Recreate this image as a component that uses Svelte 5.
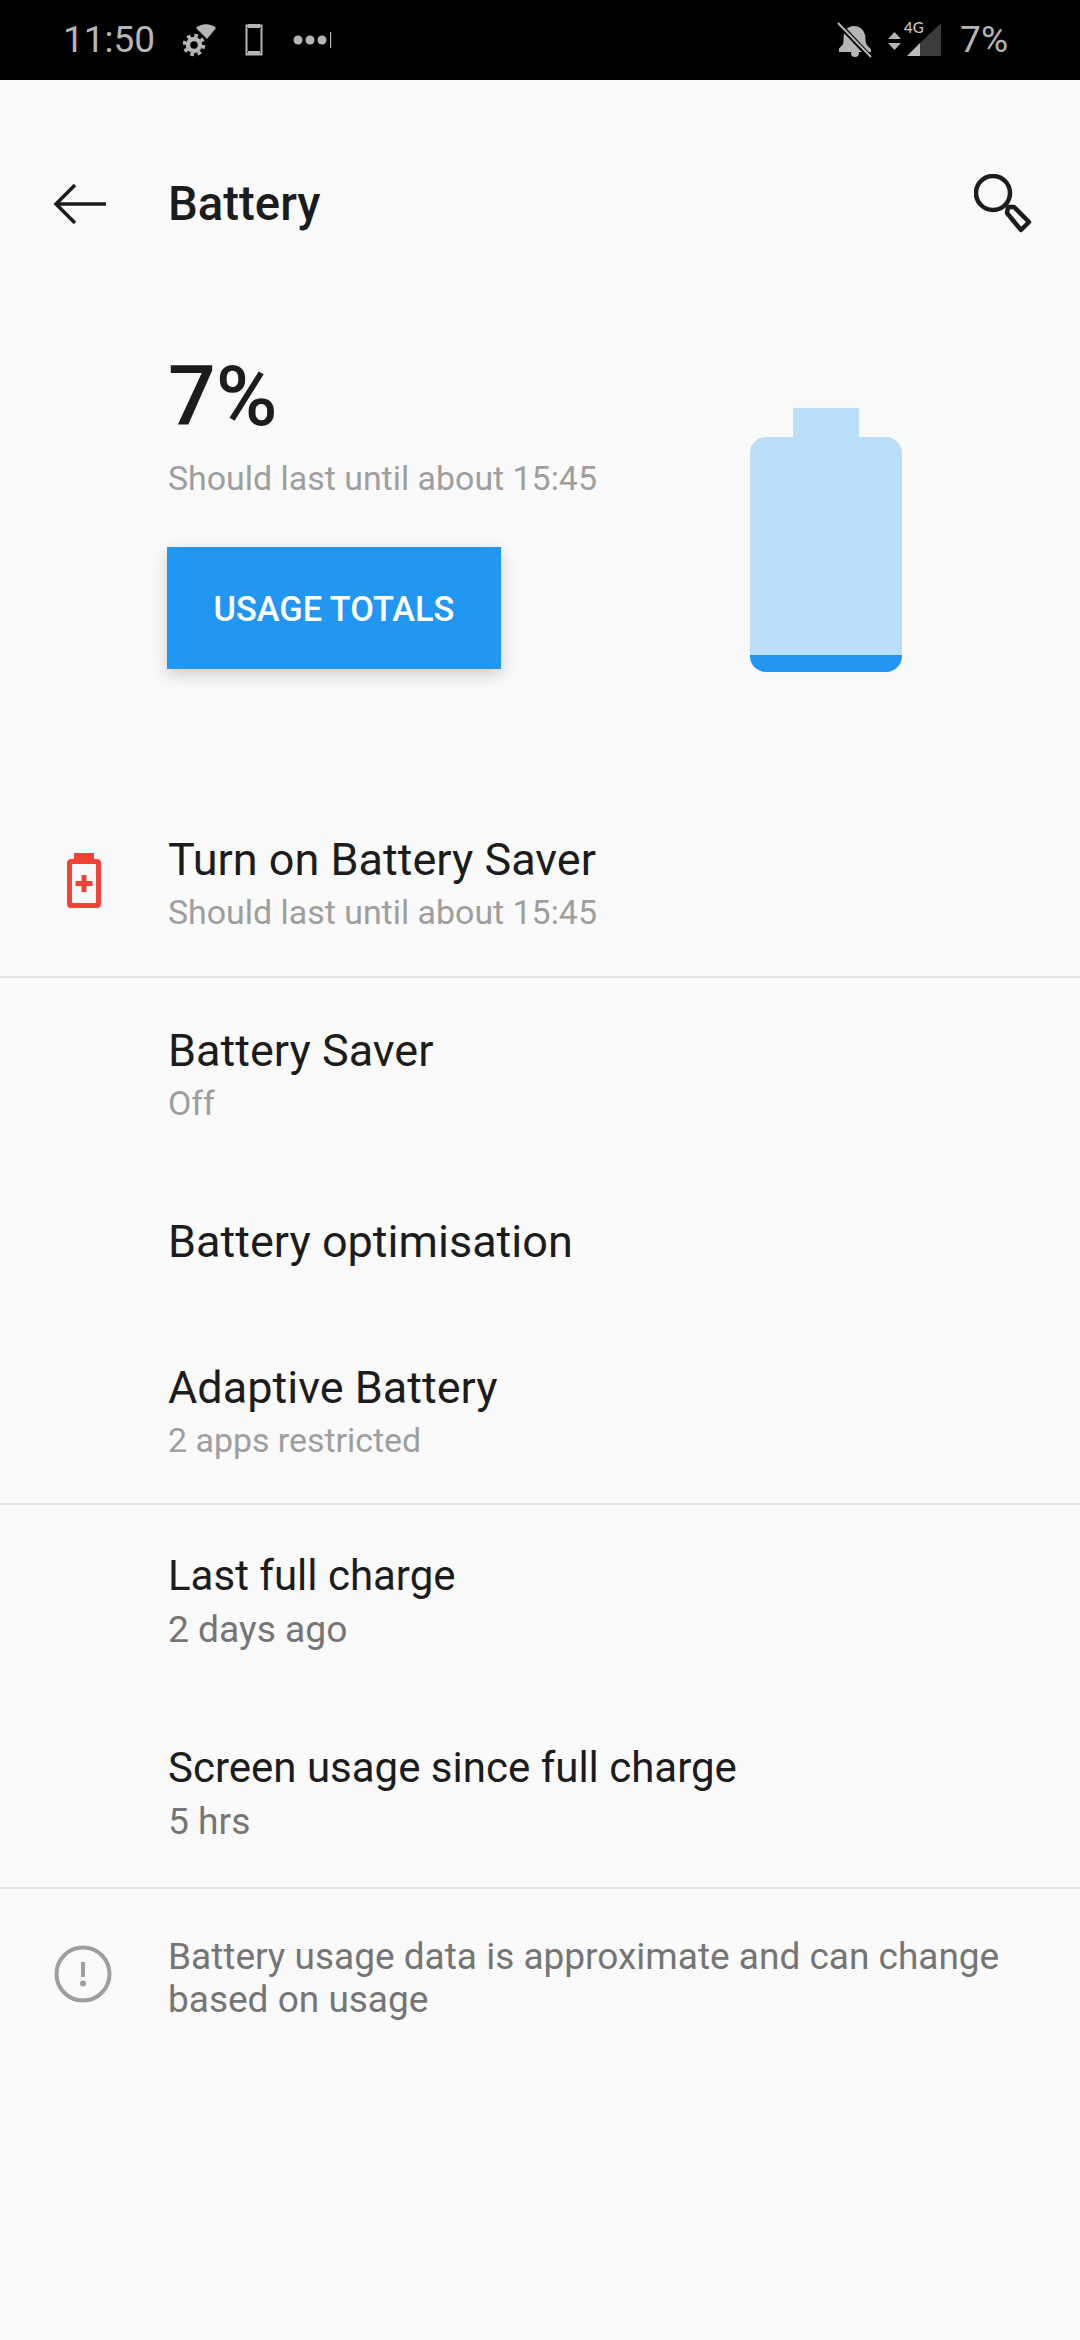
<script>
  const groups = [
    [
      { title: 'Battery Saver', sub: 'Off' },
      { title: 'Battery optimisation', single: true },
      { title: 'Adaptive Battery', sub: '2 apps restricted' }
    ],
    [
      { title: 'Last full charge', sub: '2 days ago', dark: true },
      { title: 'Screen usage since full charge', sub: '5 hrs', dark: true }
    ]
  ];
</script>

<div class="page">
  <header class="status">
    <div class="status-left">
      <span class="clock">11:50</span>
      <svg class="ico-gear" width="34" height="34" viewBox="0 0 34 34" fill="#b5b5b5">
        <path d="M13 5 C18 0 28 0 33 5 L24 16 Z"/>
        <circle cx="11" cy="22" r="6" fill="none" stroke="#b5b5b5" stroke-width="4.500"/>
        <circle cx="11" cy="22" r="9.500" fill="none" stroke="#b5b5b5" stroke-width="3.500" stroke-dasharray="3.700 3.760"/>
      </svg>
      <svg class="ico-phone" width="18" height="32" viewBox="0 0 18 32" fill="none">
        <rect x="1.500" y="1.500" width="15" height="29" stroke="#b5b5b5" stroke-width="2"/>
        <rect x="3" y="0" width="12" height="4" fill="#b5b5b5"/>
        <rect x="3" y="27" width="12" height="4" fill="#b5b5b5"/>
      </svg>
      <svg class="ico-dots" width="40" height="16" viewBox="0 0 40 16" fill="#b5b5b5">
        <circle cx="5" cy="8" r="4.500"/><circle cx="17" cy="8" r="4.500"/><circle cx="29" cy="8" r="4.500"/>
        <rect x="37" y="0" width="1.200" height="16"/>
      </svg>
    </div>
    <div class="status-right">
      <svg class="ico-bell" width="38" height="36" viewBox="0 0 38 36">
        <path fill="#b5b5b5" d="M3 27c0-1 3-3 4-5 1-3 0-6 1-10 1-5 5-8 10-8 6 0 10 4 11 9 1 4 0 7 2 10 1 2 4 3 4 5v2H3z"/>
        <circle cx="19" cy="31" r="4" fill="#b5b5b5"/>
        <path d="M2 1 L34 35" stroke="#000" stroke-width="5"/>
        <path d="M2 1 L35 35" stroke="#b5b5b5" stroke-width="2"/>
      </svg>
      <div class="net">
        <svg class="arrows" width="13" height="18" viewBox="0 0 13 18" fill="#b5b5b5">
          <path d="M6.500 0 L13 7 H0 Z"/><path d="M0 11 H13 L6.500 18 Z"/>
        </svg>
        <span class="four-g">4G</span>
        <svg class="signal" width="36" height="36" viewBox="0 0 36 36">
          <path fill="#3c3c3c" d="M35 1 V34 H14 V21 Z"/>
          <path fill="#bdbdbd" d="M1 34 L14 21 V34 Z"/>
        </svg>
      </div>
      <span class="pct">7%</span>
    </div>
  </header>

  <nav class="toolbar">
    <svg class="back" width="54" height="42" viewBox="0 0 54 42" fill="none" stroke="#1c1c1c" stroke-width="3.500">
      <path d="M53 21H3M22 2L3 21l19 19"/>
    </svg>
    <h1>Battery</h1>
    <svg class="search" width="60" height="60" viewBox="0 0 60 60" fill="none" stroke="#1c1c1c" stroke-width="4.500" stroke-linejoin="round">
      <circle cx="19" cy="19" r="17"/>
      <path d="M33 39 L34 33 L40 33 L55 48 L47 56 Z"/>
    </svg>
  </nav>

  <section class="hero">
    <div class="hero-text">
      <div class="big">7%</div>
      <div class="sub hero-sub">Should last until about 15:45</div>
      <button class="usage">USAGE TOTALS</button>
    </div>
    <div class="battery">
      <div class="nub"></div>
      <div class="body"><div class="level"></div></div>
    </div>
  </section>

  <section class="saver">
    <svg class="ico-left" width="36" height="56" viewBox="0 0 36 56" fill="none">
      <path d="M8 0h20v6h3a4 4 0 0 1 4 4v41a4 4 0 0 1-4 4H5a4 4 0 0 1-4-4V10a4 4 0 0 1 4-4h3z" fill="#f44336"/>
      <rect x="6" y="11" width="24" height="39" fill="#fafafa"/>
      <path d="M15.500 22h5v6h6v5h-6v6h-5v-6h-6v-5h6z" fill="#f44336"/>
    </svg>
    <div>
      <div class="title">Turn on Battery Saver</div>
      <div class="sub">Should last until about 15:45</div>
    </div>
  </section>

  {#each groups as group, g}
    <section class="group" class:second={g === 1}>
      {#each group as row}
        <div class="row" class:single={row.single}>
          <div class="title">{row.title}</div>
          {#if row.sub}<div class="sub" class:dark={row.dark}>{row.sub}</div>{/if}
        </div>
      {/each}
    </section>
  {/each}

  <section class="foot">
    <svg class="ico-info" width="58" height="58" viewBox="0 0 58 58" fill="none" stroke="#9e9e9e" stroke-width="4">
      <circle cx="29" cy="29" r="26.500"/>
      <path d="M29 17v15" stroke-width="4"/>
      <circle cx="29" cy="38.500" r="3" fill="#9e9e9e" stroke="none"/>
    </svg>
    <p>Battery usage data is approximate and can change based on usage</p>
  </section>
</div>

<style>
  :global(body) {
    margin: 0;
    background: #fafafa;
  }
  .page {
    width: 1080px;
    height: 2340px;
    background: #fafafa;
    font-family: Roboto, sans-serif;
    color: #1c1c1c;
    overflow: hidden;
  }
  .status {
    height: 80px;
    background: #000;
    color: #b5b5b5;
    display: flex;
    justify-content: space-between;
    align-items: center;
    box-sizing: border-box;
    padding: 0 72px 0 63px;
  }
  .status-left, .status-right {
    display: flex;
    align-items: center;
  }
  .clock, .pct {
    font-size: 37px;
    line-height: 44px;
  }
  .ico-gear { margin-left: 28px; }
  .ico-phone { margin-left: 28px; }
  .ico-dots { margin-left: 30px; }
  .net {
    position: relative;
    width: 52px;
    height: 36px;
    margin: 0 20px 0 14px;
    display: flex;
    align-items: center;
    justify-content: space-between;
  }
  .arrows { flex: none; margin-top: 2px; }
  .signal { flex: none; margin-left: 5px; }
  .four-g {
    position: absolute;
    left: 16px;
    top: -2px;
    font: 500 15px/15px Lato, sans-serif;
    color: #c8c8c8;
  }
  .toolbar {
    height: 248px;
    display: flex;
    align-items: center;
    box-sizing: border-box;
    padding-left: 53px;
    padding-right: 46px;
  }
  .toolbar h1 {
    margin: 0 0 0 61px;
    font-size: 47.300px;
    font-weight: 500;
    flex: 1;
  }
  .back { flex: none; }
  .search { flex: none; }
  .hero {
    display: flex;
    justify-content: space-between;
    height: 463px;
    box-sizing: border-box;
    padding: 20px 178px 0 167px;
  }
  .big {
    font-size: 84px;
    line-height: 98px;
    margin-left: 1px;
    font-weight: 500;
  }
  .sub {
    font-size: 33.900px;
    line-height: 56px;
    color: #9e9e9e;
  }
  .sub.dark { color: #757575; font-size: 37.200px; }
  .hero-sub { margin: 8px 0 0 1px; line-height: 50px; }
  .usage {
    display: block;
    margin-top: 43px;
    width: 334px;
    height: 122px;
    border: 0;
    padding: 2px 0 0;
    background: #2196f3;
    color: #fff;
    font: 500 34.300px Roboto, sans-serif;
    box-shadow: 0 6px 16px rgba(0, 0, 0, 0.18);
  }
  .battery {
    width: 152px;
    margin-top: 60px;
    display: flex;
    flex-direction: column;
    align-items: center;
  }
  .nub {
    width: 66px;
    height: 29px;
    background: #bbdefb;
  }
  .body {
    width: 152px;
    height: 235px;
    background: #bbdefb;
    border-radius: 16px;
    overflow: hidden;
    display: flex;
    align-items: flex-end;
  }
  .level {
    width: 100%;
    height: 17px;
    background: #2196f3;
  }
  .saver {
    display: flex;
    align-items: center;
    height: 187px;
    box-sizing: border-box;
    padding: 8px 0 0 66px;
    border-bottom: 2px solid #e3e3e3;
  }
  .ico-left { flex: none; margin: -14px 66px 0 0; }
  .title {
    font-size: 45px;
    line-height: 50px;
    color: #1c1c1c;
  }
  .second .title { font-size: 42px; }
  .group {
    border-bottom: 2px solid #e3e3e3;
    padding: 5px 0 0 168px;
    height: 527px;
    box-sizing: border-box;
  }
  .group.second {
    height: 384px;
    padding-top: 3px;
  }
  .row { padding: 43px 0; }
  .row.single { padding: 42px 0 53px; }
  .foot {
    display: flex;
    padding: 46px 40px 0 54px;
  }
  .ico-info { flex: none; margin-right: 56px; margin-top: 10px; }
  .foot p {
    margin: 0;
    font-size: 37px;
    line-height: 43px;
    color: #757575;
  }
</style>
